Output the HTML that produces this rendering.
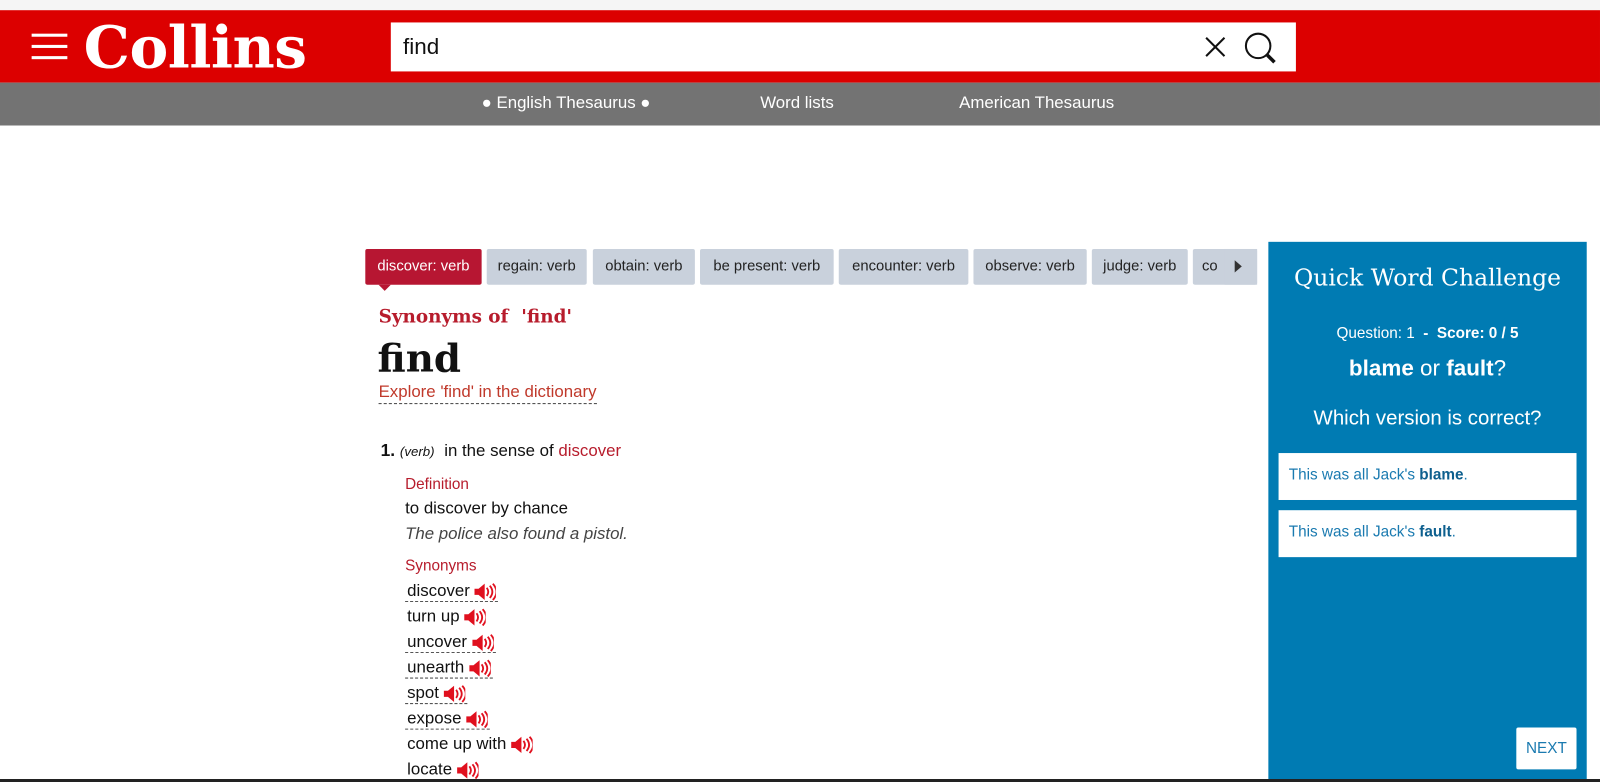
<!DOCTYPE html>
<html><head><meta charset="utf-8"><style>
*{margin:0;padding:0;box-sizing:border-box}
body{width:1600px;height:782px;overflow:hidden;background:#fff;font-family:"Liberation Sans",sans-serif;position:relative}
#w{position:absolute;left:0;top:0;width:1568px;height:766px;transform:scale(1.0204);transform-origin:0 0}
.abs{position:absolute}
.serif{font-family:"DejaVu Serif","Liberation Serif",serif}
.tab{position:absolute;top:244px;height:35px;background:#c9d1dc;border-radius:2px;font-size:14.5px;color:#222;line-height:35px;text-align:center}
.syn{position:absolute;left:397px;font-size:16.5px;color:#111;border-bottom:1px dashed #555;padding:0 2px;line-height:20px}
.spk{display:inline-block;vertical-align:middle;margin-left:4px}
</style></head><body><div id="w">
<div class="abs" style="left:0;top:0;width:1568px;height:10px;background:#f5f5f5"></div>
<div class="abs" style="left:0;top:10px;width:1568px;height:71px;background:#dc0000"></div>
<div class="abs" style="left:31px;top:33px;width:35px;height:3px;background:#fff"></div>
<div class="abs" style="left:31px;top:44px;width:35px;height:3px;background:#fff"></div>
<div class="abs" style="left:31px;top:55px;width:35px;height:3px;background:#fff"></div>
<div class="abs serif" style="left:82px;top:12px;font-size:57px;font-weight:bold;color:#fff;line-height:70px;letter-spacing:-0.5px">Collins</div>
<div class="abs" style="left:383px;top:22px;width:887px;height:48px;background:#fff"></div>
<div class="abs" style="left:395px;top:33px;font-size:22px;color:#111">find</div>
<svg class="abs" style="left:1180px;top:35px" width="22" height="22"><path d="M2 2L20 20M20 2L2 20" stroke="#111" stroke-width="2"/></svg>
<svg class="abs" style="left:1219px;top:31px" width="36" height="34"><circle cx="14" cy="14" r="12" fill="none" stroke="#111" stroke-width="2"/><path d="M23 23L30 30" stroke="#111" stroke-width="3.5"/></svg>
<div class="abs" style="left:0;top:81px;width:1568px;height:42px;background:#737373"></div>
<div class="abs" style="left:472px;top:92px;font-size:16.5px;color:#fff">● English Thesaurus ●</div>
<div class="abs" style="left:745px;top:92px;font-size:16.5px;color:#fff">Word lists</div>
<div class="abs" style="left:940px;top:92px;font-size:16.5px;color:#fff">American Thesaurus</div>

<div class="tab" style="left:358px;width:114px;background:#b71632;color:#fff">discover: verb</div>
<div class="abs" style="left:371px;top:279px;width:0;height:0;border-left:6px solid transparent;border-right:6px solid transparent;border-top:6px solid #b71632"></div>
<div class="tab" style="left:477px;width:98px">regain: verb</div>
<div class="tab" style="left:581px;width:100px">obtain: verb</div>
<div class="tab" style="left:686px;width:131px">be present: verb</div>
<div class="tab" style="left:822px;width:127px">encounter: verb</div>
<div class="tab" style="left:954px;width:111px">observe: verb</div>
<div class="tab" style="left:1070px;width:94px">judge: verb</div>
<div class="tab" style="left:1169px;width:63px;text-align:left;padding-left:9px">co</div>
<div class="abs" style="left:1200px;top:244px;width:32px;height:35px;background:#c9d1dc"></div>
<div class="abs" style="left:1210px;top:255px;border-top:6px solid transparent;border-bottom:6px solid transparent;border-left:7px solid #333"></div>

<div class="abs serif" style="left:371px;top:300px;font-size:18px;font-weight:bold;color:#b71c2c">Synonyms of &nbsp;'find'</div>
<div class="abs serif" style="left:370px;top:328px;font-size:38px;font-weight:bold;color:#111">find</div>
<div class="abs" style="left:371px;top:373px;font-size:16.5px;color:#c0392b;border-bottom:1px dashed #555;line-height:22px">Explore 'find' in the dictionary</div>
<div class="abs" style="left:373px;top:432px;font-size:17px;color:#111"><b>1.</b> <i style="font-size:13px">(verb)</i>&nbsp; <span style="font-size:16.5px">in the sense of <span style="color:#b71c2c">discover</span></span></div>
<div class="abs" style="left:397px;top:466px;font-size:15px;color:#b71c2c">Definition</div>
<div class="abs" style="left:397px;top:489px;font-size:16.5px;color:#111">to discover by chance</div>
<div class="abs" style="left:397px;top:514px;font-size:16.5px;color:#444;font-style:italic">The police also found a pistol.</div>
<div class="abs" style="left:397px;top:546px;font-size:15px;color:#b71c2c">Synonyms</div>
<div class="syn" style="top:569px">discover<svg class="spk" width="22" height="18"><path d="M1 6h4l6-5v16l-6-5H1z" fill="#e0101e"/><path d="M13 5q3 4 0 8M16 3q5 6 0 12M19 1q7 8 0 16" stroke="#e0101e" stroke-width="1.8" fill="none"/></svg></div>
<div class="syn" style="top:594px;border:0">turn up<svg class="spk" width="22" height="18"><path d="M1 6h4l6-5v16l-6-5H1z" fill="#e0101e"/><path d="M13 5q3 4 0 8M16 3q5 6 0 12M19 1q7 8 0 16" stroke="#e0101e" stroke-width="1.8" fill="none"/></svg></div>
<div class="syn" style="top:619px">uncover<svg class="spk" width="22" height="18"><path d="M1 6h4l6-5v16l-6-5H1z" fill="#e0101e"/><path d="M13 5q3 4 0 8M16 3q5 6 0 12M19 1q7 8 0 16" stroke="#e0101e" stroke-width="1.8" fill="none"/></svg></div>
<div class="syn" style="top:644px">unearth<svg class="spk" width="22" height="18"><path d="M1 6h4l6-5v16l-6-5H1z" fill="#e0101e"/><path d="M13 5q3 4 0 8M16 3q5 6 0 12M19 1q7 8 0 16" stroke="#e0101e" stroke-width="1.8" fill="none"/></svg></div>
<div class="syn" style="top:669px">spot<svg class="spk" width="22" height="18"><path d="M1 6h4l6-5v16l-6-5H1z" fill="#e0101e"/><path d="M13 5q3 4 0 8M16 3q5 6 0 12M19 1q7 8 0 16" stroke="#e0101e" stroke-width="1.8" fill="none"/></svg></div>
<div class="syn" style="top:694px">expose<svg class="spk" width="22" height="18"><path d="M1 6h4l6-5v16l-6-5H1z" fill="#e0101e"/><path d="M13 5q3 4 0 8M16 3q5 6 0 12M19 1q7 8 0 16" stroke="#e0101e" stroke-width="1.8" fill="none"/></svg></div>
<div class="syn" style="top:719px;border:0">come up with<svg class="spk" width="22" height="18"><path d="M1 6h4l6-5v16l-6-5H1z" fill="#e0101e"/><path d="M13 5q3 4 0 8M16 3q5 6 0 12M19 1q7 8 0 16" stroke="#e0101e" stroke-width="1.8" fill="none"/></svg></div>
<div class="syn" style="top:744px;border:0">locate<svg class="spk" width="22" height="18"><path d="M1 6h4l6-5v16l-6-5H1z" fill="#e0101e"/><path d="M13 5q3 4 0 8M16 3q5 6 0 12M19 1q7 8 0 16" stroke="#e0101e" stroke-width="1.8" fill="none"/></svg></div>

<div class="abs" style="left:1243px;top:237px;width:312px;height:528px;background:#007bb3"></div>
<div class="abs serif" style="left:1243px;top:260px;width:312px;text-align:center;font-size:23px;color:#fff">Quick Word Challenge</div>
<div class="abs" style="left:1243px;top:318px;width:312px;text-align:center;font-size:15px;color:#fff">Question: 1 &nbsp;<b>-</b>&nbsp; <b>Score: 0 / 5</b></div>
<div class="abs" style="left:1243px;top:348px;width:312px;text-align:center;font-size:22px;color:#fff"><b>blame</b> or <b>fault</b>?</div>
<div class="abs" style="left:1243px;top:399px;width:312px;text-align:center;font-size:20px;color:#fff">Which version is correct?</div>
<div class="abs" style="left:1253px;top:444px;width:292px;height:46px;background:#fff;padding-left:10px;line-height:44px;font-size:15px;color:#1a7ab0">This was all Jack's <b style="color:#0d5f8e">blame</b>.</div>
<div class="abs" style="left:1253px;top:500px;width:292px;height:46px;background:#fff;padding-left:10px;line-height:44px;font-size:15px;color:#1a7ab0">This was all Jack's <b style="color:#0d5f8e">fault</b>.</div>
<div class="abs" style="left:1486px;top:713px;width:59px;height:41px;background:#fff;border-radius:2px;text-align:center;line-height:41px;font-size:15px;color:#1a7ab0">NEXT</div>
</div>
<div class="abs" style="left:0;top:779px;width:1600px;height:3px;background:#222"></div>
</body></html>
